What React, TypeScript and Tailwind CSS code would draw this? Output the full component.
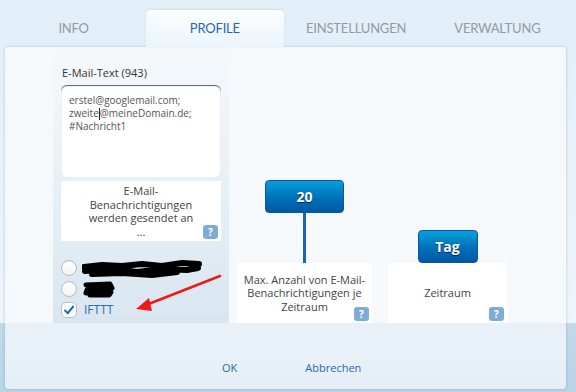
import type { ReactNode } from 'react'

const tabs = ['INFO', 'PROFILE', 'EINSTELLUNGEN', 'VERWALTUNG']

function Help() {
  return (
    <span className="absolute right-[3px] bottom-[2px] w-[15px] h-[14px] rounded-[3px] bg-[#7eacd4] text-white text-[10px] font-bold leading-[14px] text-center">
      ?
    </span>
  )
}

function InfoBox({ className, children }: { className: string; children: ReactNode }) {
  return (
    <div className={`relative bg-white flex items-center justify-center text-center text-[11px] leading-[13.5px] text-[#444] ${className}`}>
      <div>{children}</div>
      <Help />
    </div>
  )
}

function ValueButton({ label, className }: { label: string; className: string }) {
  return (
    <div
      className={`h-[33px] rounded-[4px] border border-[#1352a2] bg-[linear-gradient(to_bottom,#03a0dc,#0070b8_55%,#0058a4)] flex items-center justify-center text-white font-bold text-[14px] [text-shadow:0_1px_1px_#03264d] ${className}`}
    >
      {label}
    </div>
  )
}

function Radio() {
  return (
    <span className="w-[16px] h-[16px] rounded-full border border-[#b9bdc2] bg-[linear-gradient(to_bottom,#ffffff,#f1f3f5)] shadow-[inset_0_1px_1px_rgba(0,0,0,0.08)]" />
  )
}

export default function App() {
  return (
    <div
      className="relative w-[576px] h-[392px] overflow-hidden bg-[linear-gradient(to_bottom,#e2eff8_0px,#eef5fb_323px,#c2d9e9_323px,#b9d4e6_392px)]"
      style={{ fontFamily: '"Open Sans", "Liberation Sans", sans-serif' }}
    >
      {/* Tabs */}
      <div className="flex gap-[4px] pl-[5px] pr-[10px] pt-[10px] h-[47px]">
        {tabs.map((t) => (
          <div
            key={t}
            className={`flex-1 flex items-center justify-center text-[13px] tracking-[-0.2px] ${
              t === 'PROFILE'
                ? 'rounded-t-[5px] bg-[linear-gradient(to_bottom,#fdfeff,#eaf4fb)] text-[#1f66ae] shadow-[0_-1px_2px_rgba(0,0,0,0.08)] relative z-10 h-[38px]'
                : 'text-[#939aa1]'
            }`}
            style={{ fontFamily: 'Lato, "Open Sans", sans-serif' }}
          >
            {t}
          </div>
        ))}
      </div>

      {/* Panel */}
      <div className="ml-[5px] mr-[10px] h-[342px] rounded-[4px] overflow-hidden shadow-[0_0_3px_rgba(60,100,140,0.35)] flex flex-col">
        <div className="h-[276px] bg-[#f5f9fc] flex pl-[48px] overflow-hidden">
          {/* Left column */}
          <div className="w-[176px] px-[8px] pt-[18px] bg-[linear-gradient(to_bottom,#f5f9fc,#e6eff6_55%,#d9e6f0)] flex flex-col">
            <div className="text-[11px] leading-[15px] text-[#333] pl-[1px] h-[20px]">E-Mail-Text (943)</div>
            <div className="h-[92px] bg-white rounded-[6px] shadow-[inset_0_1px_1px_#5a5a5a] px-[8px] pt-[9px] text-[10px] leading-[12.5px] text-[#555]">
              <div>erstel@googlemail.com;</div>
              <div>
                zweite<span className="inline-block w-0 h-[12px] border-l border-[#222] align-middle" />@meineDomain.de;
              </div>
              <div>#Nachricht1</div>
            </div>
            <InfoBox className="mt-[4px] h-[60px]">
              E-Mail-
              <br />
              Benachrichtigungen
              <br />
              werden gesendet an
              <br />
              ...
            </InfoBox>
            <div className="mt-[19px] flex flex-col gap-[5px]">
              <div className="flex items-center gap-[5px] h-[16px]">
                <Radio />
                <svg width="120" height="20" viewBox="0 0 120 20" className="-my-[2px]">
                  <path
                    d="M2 9 L20 7 L40 8 L60 6 L80 8 L100 5 L117 6 M3 13 L30 11 L55 14 L80 11 L105 12 L116 10 M10 16 L40 15 L70 17 L95 14"
                    stroke="#000"
                    strokeWidth="6"
                    fill="none"
                    strokeLinecap="round"
                    strokeLinejoin="round"
                  />
                </svg>
              </div>
              <div className="flex items-center gap-[5px] h-[16px]">
                <Radio />
                <svg width="34" height="18" viewBox="0 0 34 18">
                  <path
                    d="M4 5 L28 4 L30 8 L5 10 L4 13 L29 12 L27 15 L8 15"
                    stroke="#000"
                    strokeWidth="5"
                    fill="none"
                    strokeLinecap="round"
                    strokeLinejoin="round"
                  />
                </svg>
              </div>
              <div className="flex items-center gap-[7px] h-[16px]">
                <span className="w-[16px] h-[16px] rounded-[5px] border border-[#b9bdc2] bg-white flex items-center justify-center">
                  <svg width="12" height="12" viewBox="0 0 12 12">
                    <path d="M2 6.5 L4.8 9.2 L10.2 2.5" stroke="#1a6ab3" strokeWidth="2" fill="none" strokeLinecap="round" strokeLinejoin="round" />
                  </svg>
                </span>
                <span className="text-[12px] text-[#2b6db0]">IFTTT</span>
              </div>
            </div>
          </div>

          {/* Max count */}
          <div className="ml-[8px] w-[135px] flex flex-col items-center justify-end">
            <ValueButton label="20" className="w-[79px]" />
            <div className="w-[3px] h-[50px] bg-[#1766b1]" />
            <InfoBox className="w-[135px] h-[60px]">
              Max. Anzahl von E-Mail-
              <br />
              Benachrichtigungen je
              <br />
              Zeitraum
            </InfoBox>
          </div>

          {/* Period */}
          <div className="ml-[16px] w-[119px] flex flex-col items-center justify-end">
            <ValueButton label="Tag" className="w-[60px]" />
            <InfoBox className="w-[119px] h-[60px]">Zeitraum</InfoBox>
          </div>
        </div>

        {/* Footer */}
        <div className="flex-1 bg-[linear-gradient(to_bottom,#e9f1f8,#e6eff7)] flex items-start pt-[37px] text-[11px] text-[#2a68ad]">
          <span className="ml-[217px]">OK</span>
          <span className="ml-[68px]">Abbrechen</span>
        </div>
      </div>

      {/* Red arrow annotation */}
      <svg className="absolute left-0 top-0 pointer-events-none" width="576" height="392">
        <line x1="220" y1="276" x2="146" y2="305" stroke="#ea1c16" strokeWidth="2.5" strokeLinecap="round" />
        <polygon points="136,309 149,298 152,311" fill="#ea1c16" />
      </svg>
    </div>
  )
}
